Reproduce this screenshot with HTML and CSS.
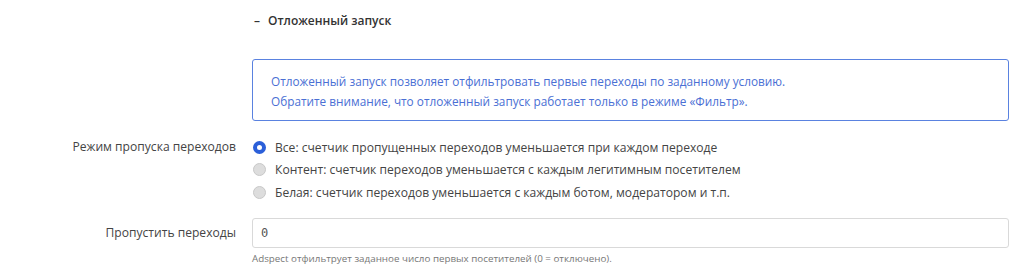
FILE: index.html
```html
<!DOCTYPE html>
<html lang="ru">
<head>
  <meta charset="UTF-8">
  <title>Отложенный запуск</title>
  <link rel="stylesheet" href="styles.css">
</head>
<body>
  <div class="section">
    <div class="section-title"><span class="toggle">–</span>Отложенный запуск</div>

    <div class="row">
      <div></div>
      <div class="alert">
        Отложенный запуск позволяет отфильтровать первые переходы по заданному условию.<br>
        Обратите внимание, что отложенный запуск работает только в режиме «Фильтр».
      </div>
    </div>

    <div class="row row-radios">
      <label class="label">Режим пропуска переходов</label>
      <div class="radios">
        <label class="radio"><input type="radio" name="mode" checked><span class="dot"></span>Все: счетчик пропущенных переходов уменьшается при каждом переходе</label>
        <label class="radio"><input type="radio" name="mode"><span class="dot"></span>Контент: счетчик переходов уменьшается с каждым легитимным посетителем</label>
        <label class="radio"><input type="radio" name="mode"><span class="dot"></span>Белая: счетчик переходов уменьшается с каждым ботом, модератором и т.п.</label>
      </div>
    </div>

    <div class="row row-input">
      <label class="label" for="skip">Пропустить переходы</label>
      <div>
        <input type="text" id="skip" class="field" value="0">
        <div class="help">Adspect отфильтрует заданное число первых посетителей (0 = отключено).</div>
      </div>
    </div>
  </div>
</body>
</html>
```

FILE: styles.css
```css
body {
  margin: 0;
  font-family: "Open Sans", "Noto Sans", Arial, sans-serif;
  font-size: 11.8px;
  color: #333;
  background-color: #fff;
}
.section {
  padding: 12px 15px 0 0;
}
.section-title {
  margin-left: 254px;
  font-weight: 600;
  font-size: 12px;
  line-height: 17px;
  color: #333;
}
.toggle {
  display: inline-block;
  width: 14px;
}
.row {
  display: grid;
  grid-template-columns: 236px 1fr;
  column-gap: 16px;
}
.alert {
  margin-top: 30px;
  padding: 11px 18px 9px;
  border: 1px solid #5a82e0;
  border-radius: 3px;
  color: #4a6fd4;
  line-height: 20px;
}
.row-radios {
  margin-top: 15px;
}
.label {
  text-align: right;
  color: #444;
  font-size: 12.1px;
  line-height: 22px;
}
.radios {
  display: flex;
  flex-direction: column;
}
.radio {
  display: flex;
  align-items: center;
  height: 22.5px;
  font-size: 12.1px;
  color: #444;
}
.radio input {
  display: none;
}
.dot {
  width: 11px;
  height: 11px;
  margin: 0 9px 0 1px;
  border-radius: 50%;
  border: 1px solid #c8c8c8;
  background-color: #ddd;
  flex-shrink: 0;
}
.radio input:checked + .dot {
  width: 5px;
  height: 5px;
  border: 4px solid #2b5fd9;
  background-color: #fff;
}
.row-input {
  margin-top: 14px;
}
.row-input .label {
  line-height: 30px;
}
.field {
  display: block;
  box-sizing: border-box;
  width: 100%;
  height: 30px;
  padding: 0 8px;
  border: 1px solid #d9d9d9;
  border-radius: 3px;
  font-family: "DejaVu Sans Mono", monospace;
  font-size: 12px;
  color: #555;
  outline: none;
}
.help {
  margin-top: 4px;
  font-size: 9.8px;
  color: #777;
}
```
